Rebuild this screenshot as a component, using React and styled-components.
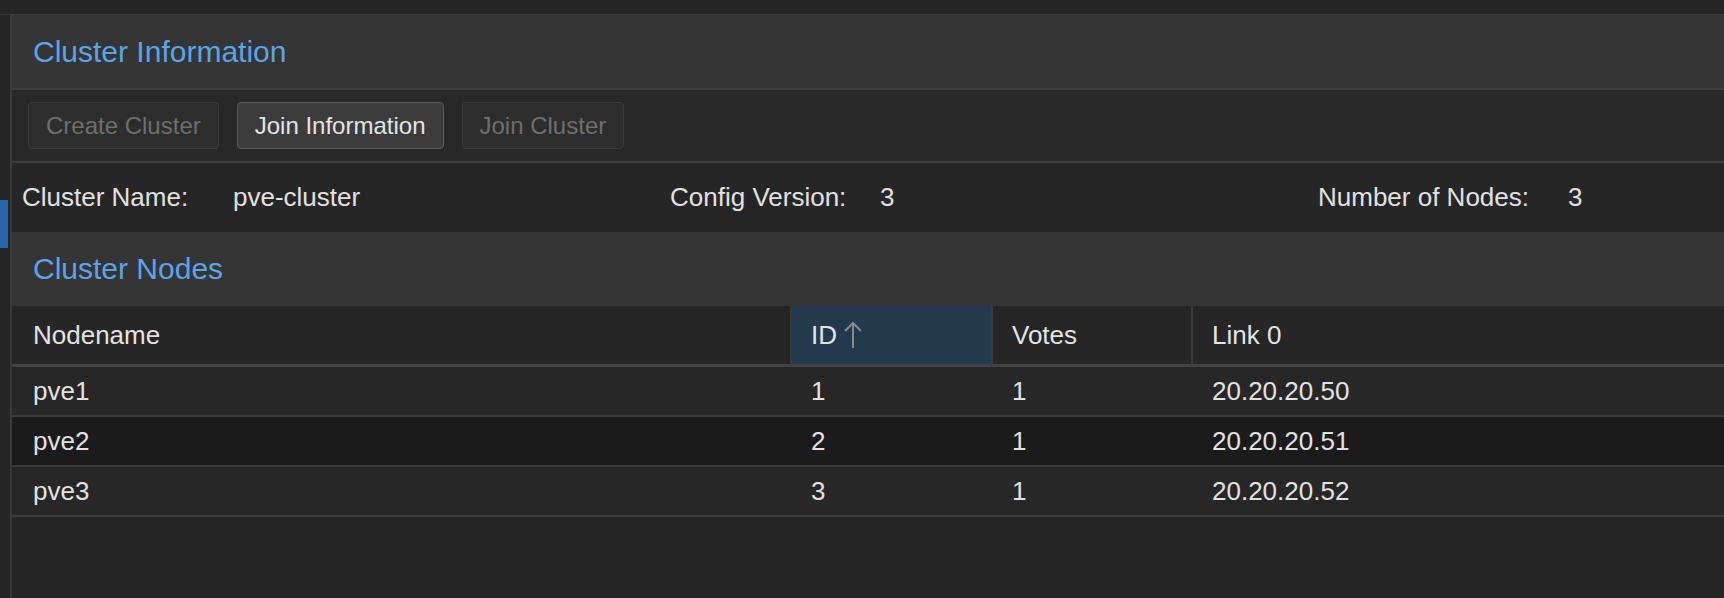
import styled, { createGlobalStyle } from 'styled-components';

const GlobalStyle = createGlobalStyle`
  html, body {
    margin: 0;
    padding: 0;
    background: #262626;
    font-family: "Liberation Sans", Arial, sans-serif;
    color: #e2e2e2;
  }
  * { box-sizing: border-box; }
`;

const Page = styled.div`
  width: 1724px;
  height: 598px;
  display: flex;
  flex-direction: column;
  overflow: hidden;
`;

const TopStrip = styled.div`
  height: 15px;
  flex-shrink: 0;
  background: #262626;
  border-bottom: 1px solid #3a3a3a;
`;

const Body = styled.div`
  flex: 1;
  display: flex;
`;

const Rail = styled.div`
  width: 12px;
  flex-shrink: 0;
  padding-top: 185px;
  background: #262626;
  border-right: 2px solid #3a3a3a;
`;

const RailMarker = styled.div`
  width: 8px;
  height: 48px;
  background: #2a62a8;
`;

const Main = styled.div`
  flex: 1;
  display: flex;
  flex-direction: column;
  background: #262626;
`;

const PanelTitle = styled.div`
  height: ${(p) => (p.$border ? '75px' : '74px')};
  flex-shrink: 0;
  display: flex;
  align-items: center;
  padding-left: 21px;
  background: #353535;
  border-bottom: ${(p) => (p.$border ? '2px solid #3c3c3c' : 'none')};
  color: #5ba4e8;
  font-size: 30px;
`;

const Toolbar = styled.div`
  height: 73px;
  flex-shrink: 0;
  display: flex;
  align-items: center;
  gap: 18px;
  padding: 0 16px;
  background: #282828;
  border-bottom: 2px solid #3c3c3c;
`;

const Button = styled.button`
  height: 47px;
  padding: 0 17px;
  border-radius: 4px;
  font-family: inherit;
  font-size: 24px;
  border: 1px solid ${(p) => (p.disabled ? '#3a3a3a' : '#5a5a5a')};
  background: ${(p) => (p.disabled ? '#2d2d2d' : '#3c3c3c')};
  color: ${(p) => (p.disabled ? '#6e6e6e' : '#e4e4e4')};
`;

const InfoRow = styled.div`
  height: 69px;
  flex-shrink: 0;
  display: flex;
  align-items: center;
  padding-left: 10px;
  font-size: 26px;
`;

const InfoItem = styled.div`
  width: 648px;
  display: flex;
`;

const InfoLabel = styled.span`
  width: ${(p) => p.$w}px;
`;

const Grid = styled.div`
  display: grid;
  grid-template-columns: 778px 201px 200px 1fr;
  font-size: 26px;
`;

const HeaderCell = styled.div`
  height: 61px;
  display: flex;
  align-items: center;
  gap: 6px;
  padding-left: ${(p) => (p.$first ? '21px' : '19px')};
  background: ${(p) => (p.$sorted ? '#233a4e' : '#262626')};
  border-left: ${(p) => (p.$first ? 'none' : '2px solid #3a3a3a')};
  border-bottom: 3px solid #424242;
  color: #e4e4e4;
`;

const Cell = styled.div`
  height: 50px;
  display: flex;
  align-items: center;
  padding-left: 21px;
  background: ${(p) => (p.$alt ? '#1b1b1b' : '#272727')};
  border-bottom: 2px solid #3c3c3c;
  color: #e2e2e2;
`;

const SortArrow = () => (
  <svg width="20" height="28" viewBox="0 0 20 28" fill="none">
    <path d="M10 27V2M2 10l8-8 8 8" stroke="#8a8a8a" strokeWidth="2" />
  </svg>
);

const nodes = [
  { name: 'pve1', id: 1, votes: 1, link: '20.20.20.50' },
  { name: 'pve2', id: 2, votes: 1, link: '20.20.20.51' },
  { name: 'pve3', id: 3, votes: 1, link: '20.20.20.52' },
];

const App = () => (
  <Page>
    <GlobalStyle />
    <TopStrip />
    <Body>
      <Rail>
        <RailMarker />
      </Rail>
      <Main>
        <PanelTitle $border>Cluster Information</PanelTitle>
        <Toolbar>
          <Button disabled>Create Cluster</Button>
          <Button>Join Information</Button>
          <Button disabled>Join Cluster</Button>
        </Toolbar>
        <InfoRow>
          <InfoItem>
            <InfoLabel $w={211}>Cluster Name:</InfoLabel>
            <span>pve-cluster</span>
          </InfoItem>
          <InfoItem>
            <InfoLabel $w={210}>Config Version:</InfoLabel>
            <span>3</span>
          </InfoItem>
          <InfoItem>
            <InfoLabel $w={250}>Number of Nodes:</InfoLabel>
            <span>3</span>
          </InfoItem>
        </InfoRow>
        <PanelTitle>Cluster Nodes</PanelTitle>
        <Grid>
          <HeaderCell $first>Nodename</HeaderCell>
          <HeaderCell $sorted>
            ID <SortArrow />
          </HeaderCell>
          <HeaderCell>Votes</HeaderCell>
          <HeaderCell>Link 0</HeaderCell>
          {nodes.map((n, i) => (
            <>
              <Cell key={n.name} $alt={i === 1}>{n.name}</Cell>
              <Cell $alt={i === 1}>{n.id}</Cell>
              <Cell $alt={i === 1}>{n.votes}</Cell>
              <Cell $alt={i === 1}>{n.link}</Cell>
            </>
          ))}
        </Grid>
      </Main>
    </Body>
  </Page>
);

export default App;
